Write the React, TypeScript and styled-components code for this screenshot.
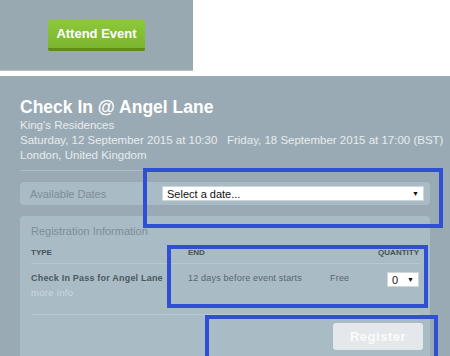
import React from 'react';
import styled, { createGlobalStyle } from 'styled-components';

const Global = createGlobalStyle`
  html, body { margin: 0; padding: 0; background: #fff; }
  body { font-family: "Liberation Sans", Arial, sans-serif; }
`;

const Page = styled.div`
  position: relative;
  width: 450px;
  height: 356px;
  overflow: hidden;
  display: flex;
  flex-direction: column;
  gap: 5px;
`;

const TopPanel = styled.div`
  width: 193px;
  height: 71px;
  background: #99a9b2;
  border-bottom: 1px solid #b4c2ca;
  box-sizing: border-box;
  display: flex;
  align-items: center;
  justify-content: center;
`;

const AttendButton = styled.button`
  width: 97px;
  height: 31px;
  border: none;
  border-radius: 2px;
  background: linear-gradient(#8dc83c, #7ab52c);
  border-bottom: 3px solid #5e8a1f;
  color: #fff;
  font: bold 13px "Liberation Sans", Arial, sans-serif;
  padding: 0;
`;

const Main = styled.div`
  flex: 1;
  background: #9aaab4;
  padding: 20px 20px 0;
  display: flex;
  flex-direction: column;
`;

const Title = styled.h1`
  margin: 0;
  font-size: 17.5px;
  line-height: 22px;
  font-weight: bold;
  color: #fff;
`;

const Info = styled.div`
  font-size: 11.5px;
  line-height: 15px;
  color: #e6ecef;
  white-space: nowrap;
  padding-bottom: 7px;
  border-bottom: 1px solid #aebdc6;
  margin-right: -8px;
`;

const Box = styled.div`
  background: #a9bbc5;
  border-radius: 4px;
  width: 410px;
  box-sizing: border-box;
`;

const DatesBox = styled(Box)`
  margin-top: 11px;
  height: 23px;
  display: flex;
  align-items: center;
  padding: 0 6px 0 10px;
`;

const Label = styled.span`
  font-size: 11px;
  color: #7d8e98;
`;

const Select = styled.div<{ $w: number }>`
  width: ${p => p.$w}px;
  height: 15px;
  background: #fff;
  border: 1px solid #cfd6da;
  box-sizing: border-box;
  display: flex;
  align-items: center;
  justify-content: space-between;
  padding: 0 4px;
  font-size: 11px;
  color: #111;
  margin-left: auto;
  &::after { content: "▼"; font-size: 7px; }
`;

const RegBox = styled(Box)`
  margin-top: 11px;
  flex: 1;
  border-radius: 4px 4px 0 0;
  padding: 5px 11px 0 11px;
`;

const Row = styled.div<{ $h: number; $top?: boolean }>`
  display: grid;
  grid-template-columns: 157px 142px 1fr auto;
  align-items: ${p => (p.$top ? 'start' : 'center')};
  padding-top: ${p => (p.$top ? 8 : 0)}px;
  box-sizing: border-box;
  height: ${p => p.$h}px;
  border-bottom: 1px solid #b8c8d0;
`;

const Head = styled.span<{ $right?: boolean }>`
  font-size: 8px;
  font-weight: bold;
  color: #46525a;
  text-align: ${p => (p.$right ? 'right' : 'left')};
`;

const Cell = styled.span`
  font-size: 9px;
  line-height: 12px;
  color: #59666e;
  letter-spacing: 0.2px;
`;

const PassName = styled.div`
  font-size: 9px;
  line-height: 12px;
  font-weight: bold;
  color: #4c5860;
  letter-spacing: 0.2px;
  white-space: nowrap;
`;

const MoreInfo = styled.div`
  font-size: 9.5px;
  color: #c9d9e1;
  margin-top: 3px;
  letter-spacing: 0.3px;
`;

const Footer = styled.div`
  display: flex;
  justify-content: flex-end;
  padding: 8px 0 0;
  margin-right: -4px;
`;

const RegisterButton = styled.button`
  width: 90px;
  height: 27px;
  border: none;
  border-radius: 3px;
  background: #e4e8ea;
  color: #fbfbfb;
  font: bold 13px "Liberation Sans", Arial, sans-serif;
  letter-spacing: 0.5px;
`;

const Highlight = styled.div<{ $x: number; $y: number; $w: number; $h: number }>`
  position: absolute;
  left: ${p => p.$x}px;
  top: ${p => p.$y}px;
  width: ${p => p.$w}px;
  height: ${p => p.$h}px;
  border: 4px solid #2f4fd4;
  box-sizing: border-box;
`;

export default function App() {
  return (
    <Page>
      <Global />
      <TopPanel>
        <AttendButton>Attend Event</AttendButton>
      </TopPanel>
      <Main>
        <Title>Check In @ Angel Lane</Title>
        <Info>
          King's Residences
          <br />
          Saturday, 12 September 2015 at 10:30 &nbsp; Friday, 18 September 2015 at 17:00 (BST)
          <br />
          London, United Kingdom
        </Info>
        <DatesBox>
          <Label>Available Dates</Label>
          <Select $w={262}>Select a date...</Select>
        </DatesBox>
        <RegBox>
          <Label>Registration Information</Label>
          <Row $h={22} style={{ marginTop: 3 }}>
            <Head>TYPE</Head>
            <Head>END</Head>
            <span />
            <Head $right>QUANTITY</Head>
          </Row>
          <Row $h={51} $top>
            <div>
              <PassName>Check In Pass for Angel Lane</PassName>
              <MoreInfo>more info</MoreInfo>
            </div>
            <Cell>12 days before event starts</Cell>
            <Cell>Free</Cell>
            <Select $w={32}>0</Select>
          </Row>
          <Footer>
            <RegisterButton>Register</RegisterButton>
          </Footer>
        </RegBox>
      </Main>
      <Highlight $x={143} $y={168} $w={300} $h={60} />
      <Highlight $x={167} $y={245} $w={261} $h={63} />
      <Highlight $x={205} $y={315} $w={233} $h={60} />
    </Page>
  );
}
